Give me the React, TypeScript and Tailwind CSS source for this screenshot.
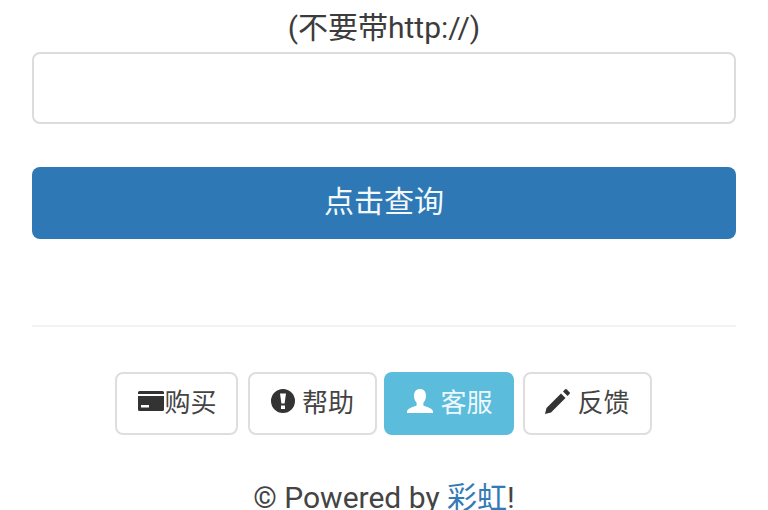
const font = "font-['Roboto','Noto_Sans_CJK_SC',sans-serif]";

function CardIcon() {
  return (
    <svg viewBox="0 0 26 20" className="w-[26px] h-[20px] shrink-0 mb-[4px]" fill="#333">
      <path d="M1.500 0h23A1.500 1.500 0 0 1 26 1.500V3H0V1.500A1.500 1.500 0 0 1 1.500 0z" />
      <path fillRule="evenodd" d="M0 5h26v13.500a1.500 1.500 0 0 1-1.500 1.500h-23A1.500 1.500 0 0 1 0 18.500zM3 14v2.500h8V14z" />
    </svg>
  );
}

function AlertIcon() {
  return (
    <svg viewBox="0 0 24 24" className="w-[24px] h-[24px] shrink-0 mb-[4px]" fill="#333">
      <path
        fillRule="evenodd"
        d="M12 0a12 12 0 1 0 0 24 12 12 0 0 0 0-24zM9 4.500h6l-1.400 10h-3.200zM10 16.500h4v3.500h-4z"
      />
    </svg>
  );
}

function UserIcon() {
  return (
    <svg viewBox="0 0 26 26" className="w-[26px] h-[26px] shrink-0 mb-[2px]" fill="#fff">
      <path d="M13 0c3.700 0 6 2.600 6 6.600 0 3-1 5.600-2.600 7.200v2.700c2.400 1.300 8.600 2.500 9.600 5.500v2H0v-2c1-3 7.200-4.200 9.600-5.500v-2.700C8 12.200 7 9.600 7 6.600 7 2.600 9.300 0 13 0z" />
    </svg>
  );
}

function PencilIcon() {
  return (
    <svg viewBox="0 0 26 26" className="w-[26px] h-[26px] shrink-0 mb-[4px]" fill="#333">
      <path d="M0 26l1.500-6L16 5.500l4.500 4.500L6 24.500z" />
      <path d="M18 3.500L20 1.500a1.300 1.300 0 0 1 1.800 0l2.700 2.700a1.300 1.300 0 0 1 0 1.800L22.500 8z" />
    </svg>
  );
}

export default function App() {
  return (
    <div className={`${font} w-[768px] h-[510px] overflow-hidden bg-white px-8 pt-2 text-[#333]`}>
      <p className="text-center text-[30px] leading-[40px] text-[#3c3c3c]">(不要带http://)</p>
      <input className="mt-1 block w-full h-[72px] rounded-lg border-2 border-[#dcdcdc] bg-white px-6 outline-none" />
      <button className="mt-[43px] block w-full h-[72px] rounded-lg bg-[#2f78b6] pb-[3px] text-center text-[30px] text-[#f2f8fc]">
        点击查询
      </button>
      <hr className="mt-[86px] border-t-2 border-[#f3f3f3]" />
      <div className="mt-[45px] flex justify-center pr-[1px]">
        <button className="flex items-center justify-center w-[123px] h-[63px] rounded-lg border-2 border-[#dedede] bg-white pl-[2px] pb-[1px] text-[26px] text-[#444]">
          <CardIcon />
          购买
        </button>
        <button className="ml-[10px] flex items-center justify-center gap-[7px] w-[129px] h-[63px] rounded-lg border-2 border-[#dedede] bg-white pb-[1px] text-[26px] text-[#444]">
          <AlertIcon />
          帮助
        </button>
        <button className="ml-[7px] flex items-center justify-center gap-[7px] w-[130px] h-[63px] rounded-lg bg-[#5bbcdc] pl-[2px] pb-[1px] text-[26px] text-[#eef8fb]">
          <UserIcon />
          客服
        </button>
        <button className="ml-[9px] flex items-center justify-center gap-[6px] w-[129px] h-[63px] rounded-lg border-2 border-[#dedede] bg-white pb-[1px] text-[26px] text-[#444]">
          <PencilIcon />
          反馈
        </button>
      </div>
      <p className="mt-[43px] text-center text-[30px] leading-[40px] text-[#444]">
        © Powered by <a className="text-[#337ab7]">彩虹</a>!
      </p>
    </div>
  );
}
